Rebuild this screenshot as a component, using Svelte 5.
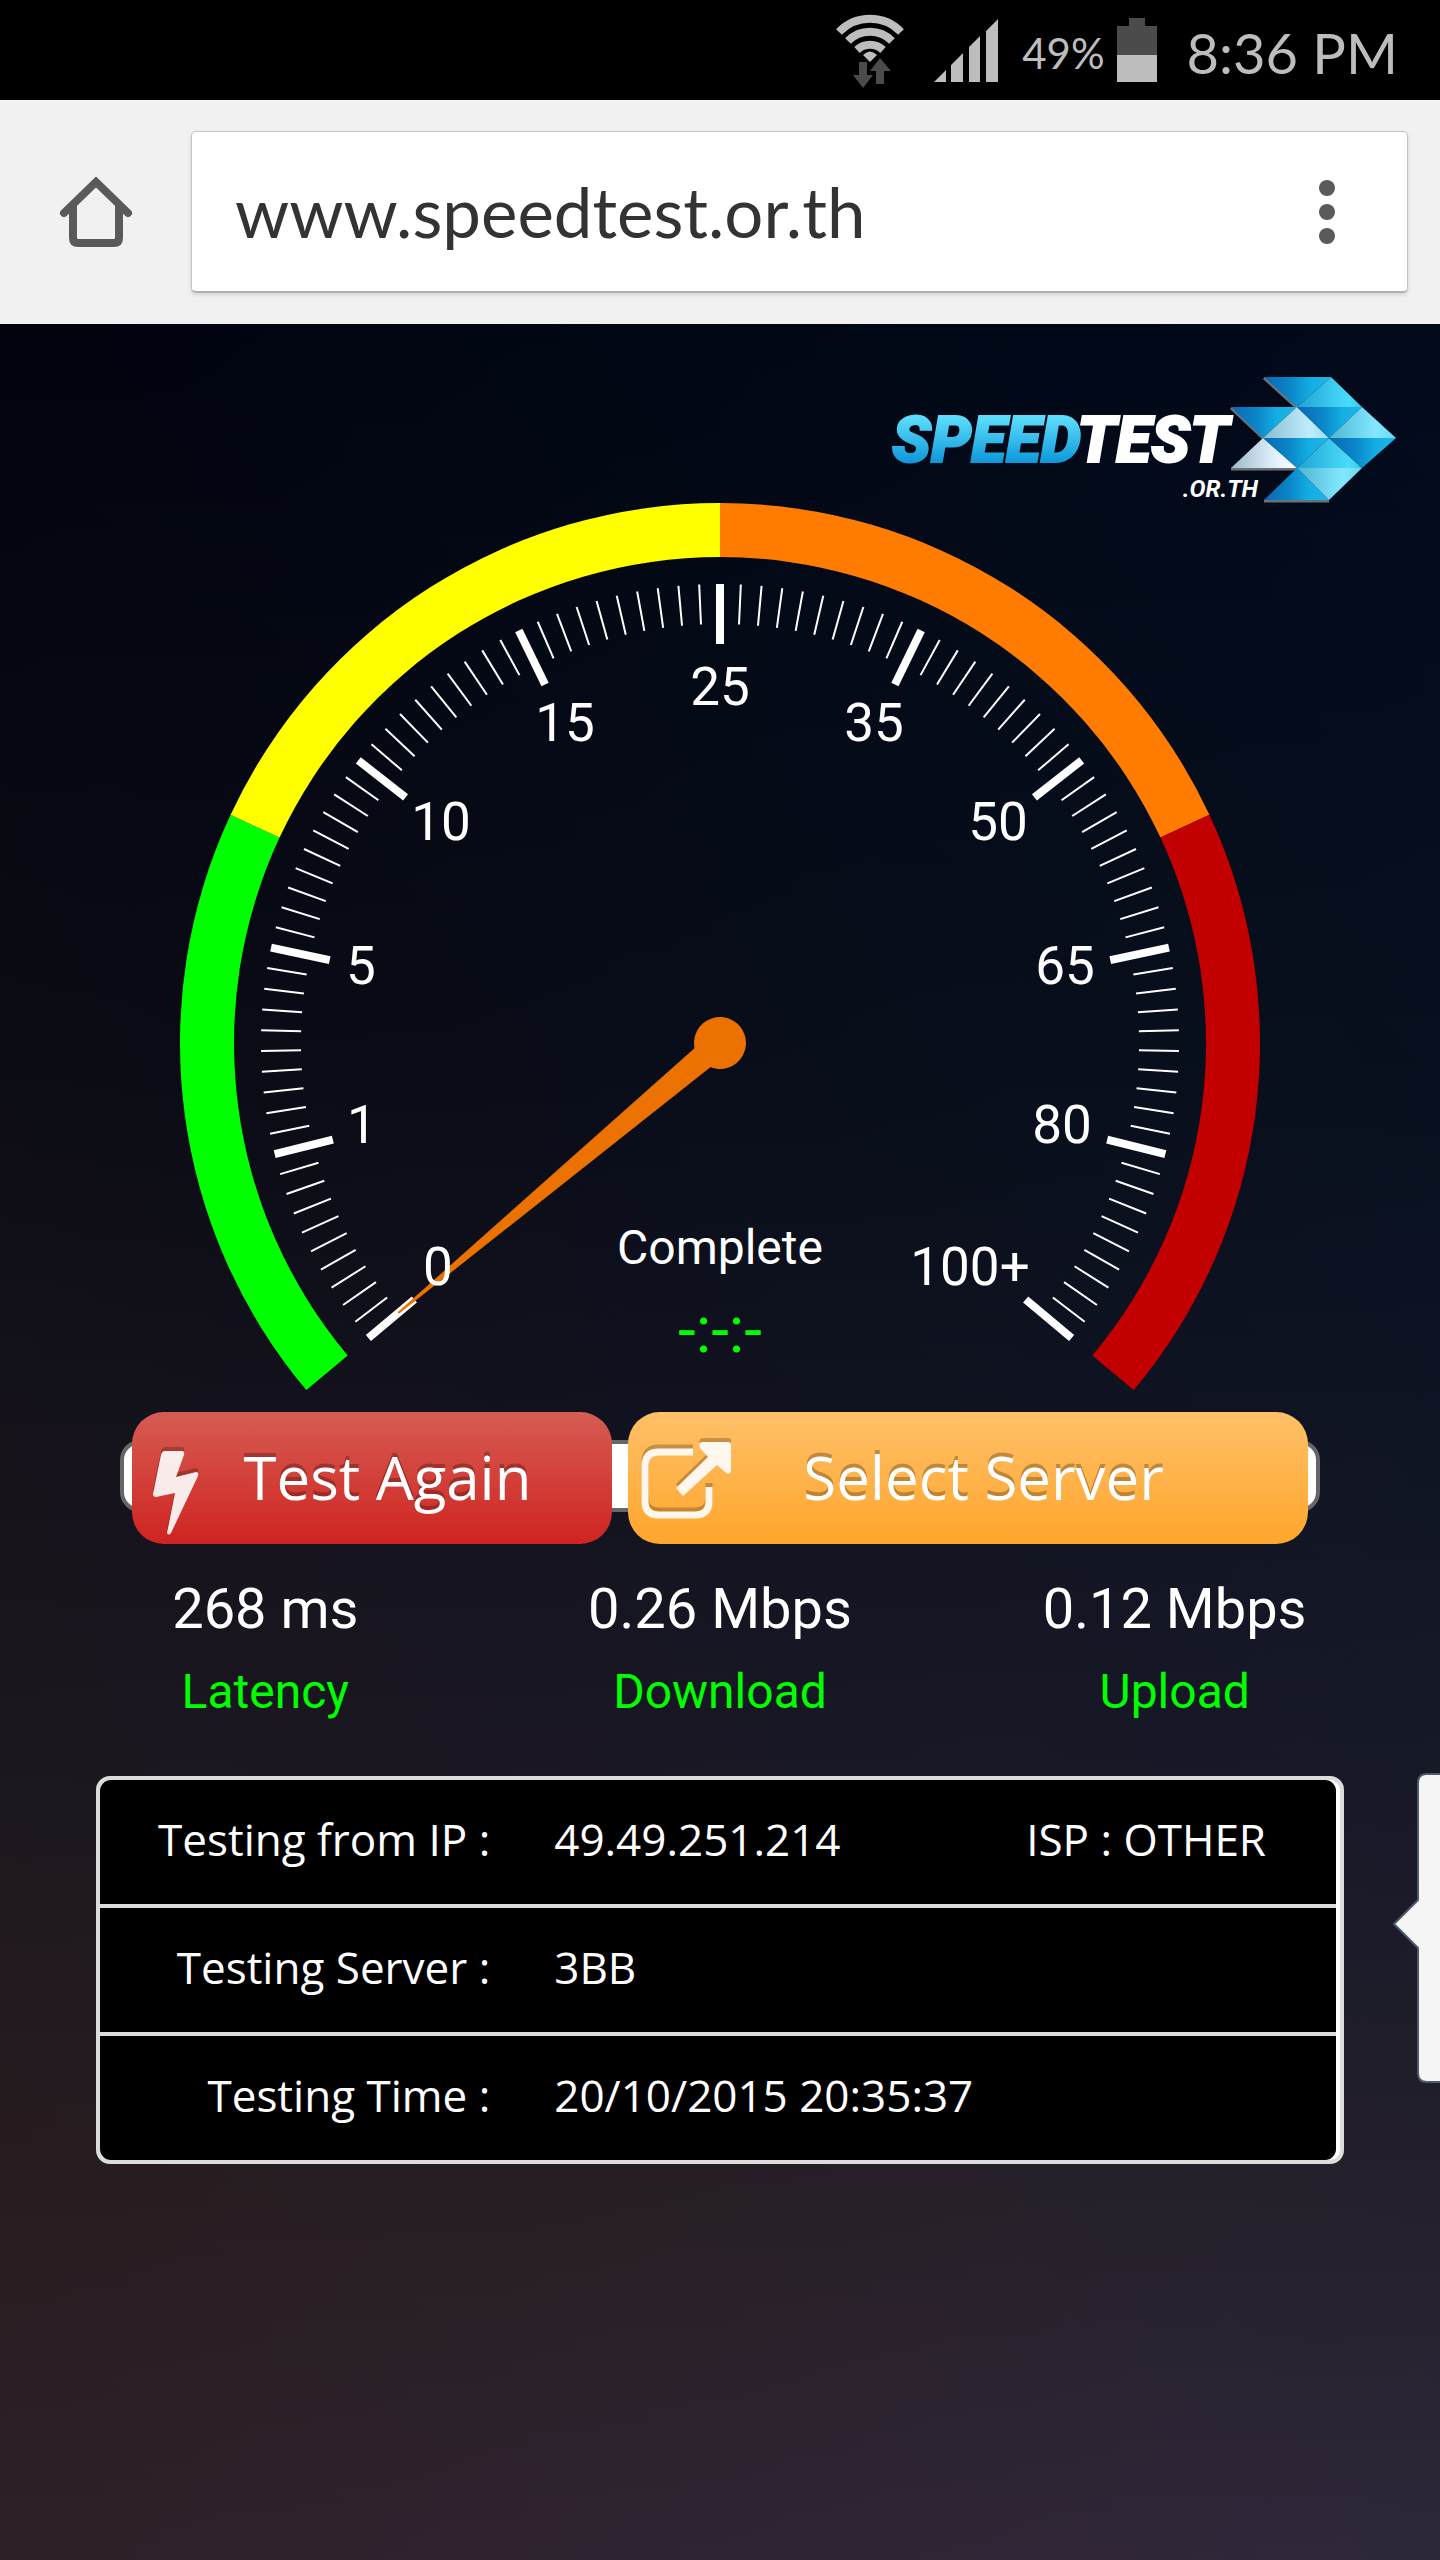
<script>
    let address = $state("www.speedtest.or.th");

    const CX = 720;
    const CY = 1043;

    // angles are measured clockwise from twelve o'clock
    function polar(angle, r) {
        const a = (angle * Math.PI) / 180;
        return [CX + r * Math.sin(a), CY - r * Math.cos(a)];
    }

    function band(from, to, outer, inner) {
        const [x1, y1] = polar(from, outer);
        const [x2, y2] = polar(to, outer);
        const [x3, y3] = polar(to, inner);
        const [x4, y4] = polar(from, inner);
        return `M${x1} ${y1}A${outer} ${outer} 0 0 1 ${x2} ${y2}L${x3} ${y3}A${inner} ${inner} 0 0 0 ${x4} ${y4}Z`;
    }

    const bands = [
        { from: -130, to: -65, color: "#00ff00" },
        { from: -65, to: 0, color: "#ffff00" },
        { from: 0, to: 65, color: "#ff7c00" },
        { from: 65, to: 130, color: "#c30000" },
    ];

    const ticks = Array.from({ length: 101 }, (_, i) => {
        const major = i % 10 === 0;
        const angle = -130 + i * 2.6;
        const [x1, y1] = polar(angle, 459);
        const [x2, y2] = polar(angle, major ? 399 : 419);
        return { x1, y1, x2, y2, major };
    });

    const marks = [
        { text: "0", x: 438, y: 1285 },
        { text: "1", x: 362, y: 1143 },
        { text: "5", x: 361, y: 984 },
        { text: "10", x: 441, y: 840 },
        { text: "15", x: 565, y: 741 },
        { text: "25", x: 720, y: 705 },
        { text: "35", x: 874, y: 741 },
        { text: "50", x: 998, y: 840 },
        { text: "65", x: 1065, y: 984 },
        { text: "80", x: 1062, y: 1143 },
        { text: "100+", x: 970, y: 1285 },
    ];

    const results = [
        { label: "Latency", value: "268 ms" },
        { label: "Download", value: "0.26 Mbps" },
        { label: "Upload", value: "0.12 Mbps" },
    ];

    const triangles = [
        { points: "1264,377 1331,377 1297,407", fill: "url(#deep)" },
        { points: "1331,377 1362,407 1297,407", fill: "url(#sky)" },
        { points: "1231,407 1297,407 1263,438", fill: "url(#deep)" },
        { points: "1297,407 1329,438 1263,438", fill: "url(#ice)" },
        { points: "1297,407 1362,407 1329,438", fill: "url(#deep)" },
        { points: "1362,407 1396,438 1329,438", fill: "url(#pale)" },
        { points: "1263,438 1297,468 1231,468", fill: "url(#snow)" },
        { points: "1263,438 1329,438 1297,468", fill: "url(#deep)" },
        { points: "1329,438 1362,468 1297,468", fill: "url(#sky)" },
        { points: "1329,438 1396,438 1362,468", fill: "url(#deep)" },
        { points: "1297,468 1329,500 1264,500", fill: "url(#deep)" },
        { points: "1297,468 1362,468 1329,500", fill: "url(#pale)" },
    ];
</script>

<div class="screen">
    <div class="status">
        <svg class="wifi" viewBox="0 0 68 70" aria-label="Wi-Fi">
            <g fill="none" stroke="#bdbdbd" stroke-width="8">
                <path d="M3 17A43 43 0 0 1 65 17" />
                <path d="M12 26A31 31 0 0 1 56 26" />
                <path d="M21 35A19 19 0 0 1 47 35" />
            </g>
            <path d="M27 40Q34 33 41 40L34 47Z" fill="#bdbdbd" />
            <path
                d="M23 47h8v13h6L27 73 17 60h6ZM44 43l11 13h-7v13h-8V56h-6Z"
                fill="#4b4b4b"
            />
        </svg>
        <svg class="signal" viewBox="0 0 64 63" aria-label="Signal">
            <path
                d="M0 63L12 51V63ZM17 63V46L29 34V63ZM35 63V28L46 17V63ZM52 63V12L64 0V63Z"
                fill="#bdbdbd"
            />
        </svg>
        <span class="percent">49%</span>
        <svg class="battery" viewBox="0 0 40 64" aria-label="Battery">
            <path d="M0 8H12V0H28V8H40V37H0Z" fill="#4b4b4b" />
            <path d="M0 37H40V64H0Z" fill="#bdbdbd" />
        </svg>
        <span class="clock">8:36 PM</span>
    </div>

    <header class="toolbar">
        <button type="button" class="home" aria-label="Home">
            <svg viewBox="0 0 74 74">
                <path
                    d="M5 38L37 7 69 38M14 32V63Q14 68 19 68H55Q60 68 60 63V32"
                    fill="none"
                    stroke="#5a5a5a"
                    stroke-width="8"
                    stroke-linecap="round"
                />
            </svg>
        </button>
        <div class="omnibox">
            <input
                type="text"
                aria-label="Address"
                bind:value={address}
                spellcheck="false"
            />
            <button type="button" class="more" aria-label="More options">
                <svg viewBox="0 0 20 66" fill="#5a5a5a">
                    <circle cx="10" cy="9" r="8" />
                    <circle cx="10" cy="33" r="8" />
                    <circle cx="10" cy="57" r="8" />
                </svg>
            </button>
        </div>
    </header>

    <main>
        <a class="logo" href="/" aria-label="Speedtest.or.th">
            <svg viewBox="888 370 512 133">
                <defs>
                    <linearGradient id="word" x1="0" y1="0" x2="0" y2="1">
                        <stop offset="0.2" stop-color="#5cdcfb" />
                        <stop offset="0.8" stop-color="#0c97da" />
                    </linearGradient>
                    <linearGradient id="deep">
                        <stop offset="0" stop-color="#0867b4" />
                        <stop offset="0.4" stop-color="#0b87c9" />
                        <stop offset="0.7" stop-color="#14aee4" />
                        <stop offset="1" stop-color="#20b4e6" />
                    </linearGradient>
                    <linearGradient id="sky">
                        <stop offset="0" stop-color="#1fa3d4" />
                        <stop offset="0.8" stop-color="#4adcfa" />
                        <stop offset="1" stop-color="#35c6e8" />
                    </linearGradient>
                    <linearGradient id="pale">
                        <stop offset="0" stop-color="#4eb5d3" />
                        <stop offset="0.7" stop-color="#83e8ff" />
                        <stop offset="1" stop-color="#6bd5ee" />
                    </linearGradient>
                    <linearGradient id="ice">
                        <stop offset="0" stop-color="#87bcd0" />
                        <stop offset="0.7" stop-color="#c0edfd" />
                        <stop offset="1" stop-color="#9cdcf3" />
                    </linearGradient>
                    <linearGradient id="snow">
                        <stop offset="0" stop-color="#9dbac9" />
                        <stop offset="0.7" stop-color="#e4f4fd" />
                        <stop offset="1" stop-color="#ffffff" />
                    </linearGradient>
                </defs>
                <path
                    d="M1264 378L1297 408M1231 408L1297 470M1231 469H1297M1264 501H1329"
                    stroke="#6e7076"
                    stroke-width="3"
                />
                {#each triangles as t}
                    <polygon points={t.points} fill={t.fill} />
                {/each}
                <g class="wordmark">
                    <text x="892" y="462" class="speed">SPEED</text>
                    <text x="1229" y="462" class="test">TEST</text>
                    <text x="1258" y="497" class="domain">.OR.TH</text>
                </g>
            </svg>
        </a>

        <svg class="gauge" viewBox="180 503 1080 889" role="img" aria-label="Speed gauge">
            {#each bands as b}
                <path d={band(b.from, b.to, 540, 486)} fill={b.color} />
            {/each}
            {#each ticks as t}
                <line
                    x1={t.x1}
                    y1={t.y1}
                    x2={t.x2}
                    y2={t.y2}
                    class="tick"
                    class:major={t.major}
                />
            {/each}
            <g transform="rotate(-130 {CX} {CY})" fill="#eb7100">
                <path d="M707 1043L719 623H721L733 1043Z" />
                <circle cx={CX} cy={CY} r="26" />
            </g>
            {#each marks as m}
                <text x={m.x} y={m.y} class="mark">{m.text}</text>
            {/each}
            <text x={CX} y="1264" class="state">Complete</text>
            <text x={CX} y="1352" class="timer">-:-:-</text>
        </svg>

        <div class="actions">
            <button type="button" class="action again">
                <svg viewBox="0 0 46 88">
                    <path
                        d="M12 4H29Q32 4 31 8L23 30 43 25Q46 25 45 29L18 86Q16 89 14 86L22 46 3 50Q0 50 0 47L8 8Q9 4 12 4Z"
                    />
                </svg>
                <span>Test Again</span>
            </button>
            <button type="button" class="action select">
                <svg viewBox="0 0 92 84">
                    <path
                        d="M52 14H18Q4 14 4 28V63Q4 77 18 77H54Q68 77 68 63V49"
                        fill="none"
                        stroke="#fff"
                        stroke-width="7"
                    />
                    <path
                        d="M62 4H87Q90 4 90 7V33Q88 38 84 34L76 27 42 58 35 50 67 19 59 10Q57 4 62 4Z"
                    />
                </svg>
                <span>Select Server</span>
            </button>
        </div>

        <dl class="results">
            {#each results as r}
                <div class="result">
                    <dt>{r.label}</dt>
                    <dd>{r.value}</dd>
                </div>
            {/each}
        </dl>

        <div class="details">
            <table>
                <tbody>
                    <tr>
                        <th scope="row">Testing from IP :</th>
                        <td>49.49.251.214</td>
                        <td class="isp">ISP : OTHER</td>
                    </tr>
                    <tr>
                        <th scope="row">Testing Server :</th>
                        <td colspan="2">3BB</td>
                    </tr>
                    <tr>
                        <th scope="row">Testing Time :</th>
                        <td colspan="2">20/10/2015 20:35:37</td>
                    </tr>
                </tbody>
            </table>
            <button type="button" class="drawer" aria-label="Open side panel">
                <svg viewBox="0 0 48 312">
                    <path
                        d="M60 1H34Q25 1 25 10V127L1 151 25 175V300Q25 309 34 309H60Z"
                        fill="#f5f5f5"
                        stroke="#4e5b66"
                        stroke-width="2"
                    />
                </svg>
            </button>
        </div>
    </main>
</div>

<style>
    :global(body) {
        margin: 0;
        background: #000;
    }

    .screen {
        min-height: 100vh;
        display: flex;
        flex-direction: column;
        font-family: Roboto, "Liberation Sans", sans-serif;
        color: #fff;
    }

    button {
        padding: 0;
        border: none;
        background: none;
        font: inherit;
        color: inherit;
        cursor: pointer;
    }

    svg {
        display: block;
    }

    .status {
        display: flex;
        align-items: center;
        justify-content: flex-end;
        height: 100px;
        padding: 0 42px;
        background: #000;
        color: #bdbdbd;
        font-family: Lato, sans-serif;
    }

    .wifi {
        width: 68px;
        height: 70px;
        margin-right: 30px;
        overflow: visible;
    }

    .signal {
        width: 64px;
        height: 63px;
        margin-right: 24px;
    }

    .percent {
        margin-right: 12px;
        font-size: 42px;
        line-height: 64px;
        padding-top: 6px;
    }

    .battery {
        width: 40px;
        height: 64px;
        margin-right: 30px;
    }

    .clock {
        font-size: 56px;
        line-height: 64px;
        padding-top: 6px;
    }

    .toolbar {
        display: flex;
        align-items: center;
        gap: 58px;
        height: 224px;
        padding: 0 32px 0 59px;
        box-sizing: border-box;
        background: #f1f1f1;
    }

    .home {
        width: 74px;
        height: 74px;
    }

    .omnibox {
        flex: 1;
        display: flex;
        align-items: center;
        height: 162px;
        box-sizing: border-box;
        border: 1px solid #c4c4c4;
        border-bottom: 2px solid #b0b0b0;
        border-radius: 5px;
        background: #fff;
        box-shadow: 0 2px 4px rgba(0, 0, 0, 0.12);
    }

    .omnibox input {
        flex: 1;
        min-width: 0;
        padding: 0 0 0 43px;
        border: none;
        outline: none;
        background: transparent;
        color: #333;
        font-family: Lato, sans-serif;
        font-size: 69px;
    }

    .more {
        width: 20px;
        margin-right: 70px;
    }

    main {
        flex: 1;
        padding-bottom: 120px;
        overflow: hidden;
        background:
            linear-gradient(
                to top right,
                rgba(40, 20, 8, 0.35),
                rgba(40, 20, 8, 0) 45%
            ),
            linear-gradient(
                to bottom left,
                rgba(0, 36, 72, 0.25),
                rgba(0, 36, 72, 0) 60%
            ),
            linear-gradient(
                #01020c 0%,
                #090b15 33%,
                #12121e 50%,
                #1a1825 66%,
                #272029 84%,
                #30273a 100%
            );
    }

    .logo {
        display: block;
        width: 512px;
        margin: 46px 40px 0 auto;
    }

    .logo svg {
        overflow: visible;
    }

    .wordmark {
        font-weight: 900;
        font-style: italic;
    }

    .speed {
        fill: url(#word);
        stroke: url(#word);
        stroke-width: 2;
        font-size: 64px;
    }

    .test {
        fill: #fff;
        stroke: #fff;
        stroke-width: 2;
        font-size: 64px;
        text-anchor: end;
    }

    .domain {
        fill: #fff;
        font-size: 24px;
        font-weight: 700;
        text-anchor: end;
    }

    .gauge {
        width: 75%;
        margin: 0 auto;
    }

    .tick {
        stroke: #fff;
        stroke-width: 2;
    }

    .tick.major {
        stroke-width: 8;
    }

    .gauge text {
        fill: #fff;
        text-anchor: middle;
    }

    .mark {
        font-size: 53px;
    }

    .state {
        font-size: 48px;
    }

    .gauge .timer {
        fill: #00ff00;
        font-size: 64px;
    }

    .actions {
        position: relative;
        display: grid;
        grid-template-columns: 480fr 680fr;
        gap: 16px;
        margin: 20px 120px 0;
        padding: 0 12px;
    }

    .actions::before {
        content: "";
        position: absolute;
        inset: 28px 0 32px;
        box-sizing: border-box;
        border: 4px solid #666;
        border-radius: 20px;
        background: #fff;
    }

    .action {
        position: relative;
        display: flex;
        align-items: center;
        min-width: 0;
        height: 132px;
        border-radius: 32px;
        font-family: "Open Sans", sans-serif;
        font-size: 60px;
        line-height: 80px;
        white-space: nowrap;
        text-shadow: 0 -4px 0 rgba(0, 0, 0, 0.25);
    }

    .action span {
        flex: 1;
        padding-bottom: 2px;
        text-align: center;
    }

    .action svg {
        flex: none;
        fill: #fff;
        opacity: 0.9;
        filter: drop-shadow(0 -4px 0 rgba(0, 0, 0, 0.25));
    }

    .again {
        padding: 0 80px 0 21px;
        background: linear-gradient(#d65c52, #cf2421);
    }

    .again svg {
        width: 46px;
        height: 88px;
        margin-top: 26px;
        margin-right: 44px;
    }

    .select {
        padding: 0 144px 0 13px;
        background: linear-gradient(#ffc068, #ffa62c);
    }

    .select svg {
        width: 92px;
        height: 84px;
        margin-top: 4px;
        margin-right: 70px;
    }

    .results {
        display: grid;
        grid-template-columns: repeat(3, 1fr);
        margin: 33px 38px 0;
    }

    .result {
        display: flex;
        flex-direction: column-reverse;
        gap: 23px;
        text-align: center;
    }

    .result dt {
        color: #00ff00;
        font-size: 48px;
        line-height: 56px;
    }

    .result dd {
        margin: 0;
        font-size: 56px;
        line-height: 64px;
    }

    .details {
        position: relative;
        margin: 56px 96px 0;
        padding-right: 4px;
        border: 4px solid #dcdcdc;
        border-radius: 14px;
        background: #fff;
    }

    table {
        width: 100%;
        border-spacing: 0;
        border-radius: 11px;
        background: #000;
        font-family: "Open Sans", sans-serif;
        font-size: 44px;
        line-height: 60px;
    }

    th,
    td {
        padding: 29px 0 35px 34px;
        font-weight: 400;
        text-align: left;
        white-space: nowrap;
        border-bottom: 4px solid #dcdcdc;
    }

    tr:last-child th,
    tr:last-child td {
        border-bottom: none;
    }

    th {
        width: 34%;
        box-sizing: border-box;
        padding-right: 30px;
        text-align: right;
    }

    td.isp {
        padding-right: 70px;
        text-align: right;
    }

    .drawer {
        position: absolute;
        top: -7px;
        right: -101px;
        width: 48px;
        height: 312px;
    }
</style>
